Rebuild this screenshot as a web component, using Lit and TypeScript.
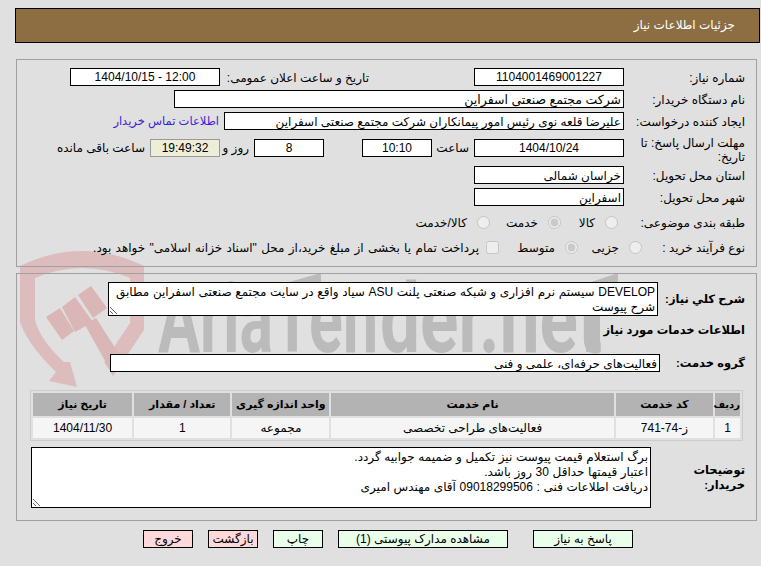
import { LitElement, html, css, svg } from "lit";
import { customElement } from "lit/decorators.js";

const watermark = svg`
  <svg class="wm" width="761" height="566" viewBox="0 0 761 566" xmlns="http://www.w3.org/2000/svg" aria-hidden="true">
    <path fill="#dcbcbc" d="M20 266 Q82 236 144 266 L144 330 L113 376 L104 362 L130 323 L130 278 Q82 258 35 278 L35 320 Q40 340 64 362 L70 362 L77 387 L49 381 L56 372 Q28 345 20 322 Z"/>
    <g fill="#dab6b6">
      <path d="M46 317 L60 308 L74 331 L62 340 Z"/>
      <path d="M62 307 L75 297 L93 322 L75 332 Z"/>
      <path d="M78 295 L91 286 L107 308 L93 318 Z"/>
      <path d="M85 325 L96 318 L123 360 L113 375 Z"/>
    </g>
    <g fill="#bbbbbb" font-family="Roboto, sans-serif" font-weight="700" font-size="96">
      <text x="158" y="352" textLength="220" lengthAdjust="spacingAndGlyphs">AriaTen</text>
      <text x="380" y="352" textLength="222" lengthAdjust="spacingAndGlyphs">der.net</text>
    </g>
    <path fill="#bbbbbb" d="M268 288 L321 273 L321 283 L280 295 Z"/>
    <path fill="#bbbbbb" d="M562 292 L618 273 L618 288 L600 294 L600 352 L586 352 L586 297 L562 304 Z"/>
  </svg>`;

@customElement("app-root")
export class AppRoot extends LitElement {
  static styles = css`
    :host {
      display: block;
      width: 761px;
      height: 566px;
      overflow: hidden;
      background: #e0e0e0;
      color: #000;
      font: 12px/15px "Liberation Sans", "DejaVu Sans", sans-serif;
    }
    .page { position: relative; height: 566px; direction: rtl; }
    .wm { position: absolute; left: 0; top: 0; direction: ltr; }
    .content { position: relative; padding: 8px 1px 0 0; }
    .header {
      height: 35px;
      margin-left: 15px;
      background: #8d6e42;
      border: 1px solid #000;
      box-sizing: border-box;
      color: #fff;
      display: flex;
      align-items: center;
      padding-right: 24px;
    }
    .fs {
      box-sizing: border-box;
      margin: 0 3px 0 0;
      width: 741px;
      border: 1px solid #a0a0a0;
      padding-right: 11px;
    }
    .fs1 { margin-top: 16px; height: 208px; padding-top: 8px; }
    .fs2 { margin-top: 6px; height: 248px; padding-top: 8px; }
    .row { display: flex; align-items: center; height: 18px; }
    .mt4 { margin-top: 4px; }
    .mt9 { margin-top: 9px; }
    .lab { width: 121px; flex: none; padding-top: 2px; box-sizing: border-box; }
    .lab-wrap { line-height: 14px; margin-top: 3px; padding-top: 0; }
    .box {
      box-sizing: border-box;
      height: 18px;
      background: #fff;
      border: 1px solid #000;
      padding: 0 2px;
      line-height: 16px;
      flex: none;
      white-space: nowrap;
      overflow: hidden;
    }
    .ar { padding-top: 1px; }
    .c { text-align: center; }
    .w150 { width: 150px; }
    .w70 { width: 70px; }
    .w400 { width: 400px; }
    .w450 { width: 450px; }
    .big-text { font-size: 12.5px; }
    .timer { background: #eeeed8; border-color: #999; }
    .after { margin-right: 5px; white-space: nowrap; }
    .pub { width: 149px; flex: none; margin-right: 105px; padding-top: 2px; white-space: nowrap; }
    .link { color: #3a22d6; margin-right: 5px; font-size: 11.5px; }
    .gap38 { margin-right: 38px; }
    .t1 { width: 42px; padding-right: 5px; box-sizing: border-box; flex: none; white-space: nowrap; }
    .t2 { width: 34px; padding-right: 5px; box-sizing: border-box; flex: none; white-space: nowrap; }
    .opts { display: flex; align-items: center; height: 18px; }
    .opt { display: flex; align-items: center; flex: none; white-space: nowrap; }
    .opt input { margin: 0; flex: none; width: 13px; height: 13px; }
    .opt span { margin-right: 10px; margin-top: 3px; }
    .opt .near { margin-right: 7px; word-spacing: 1px; }
    .r7 { margin-top: 7px; }
    .r8 { margin-top: 7px; }
    .lab8 { width: 103px; flex: none; padding-top: 2px; }
    .o1 { width: 63px; padding-right: 6px; box-sizing: border-box; margin-right: 0; }
    .o2 { width: 71px; }
    .o8a { width: 64px; }
    .o8b { width: 79px; }
    .bold { font-weight: 700; font-size: 11.5px; }
    .lab2 { width: 87px; flex: none; }
    .ta {
      box-sizing: border-box;
      display: block;
      flex: none;
      background: #fff;
      border: 1px solid #000;
      border-radius: 0;
      padding: 2px;
      margin: 0;
      font: inherit;
      line-height: 15px;
      word-spacing: 0.3px;
      color: #000;
      overflow: hidden;
      outline: none;
    }
    .ta1 { width: 550px; height: 34px; }
    .ta2 { width: 620px; height: 61px; }
    .topRow { display: flex; align-items: center; }
    .sub { margin-top: 7px; height: 15px; }
    .grp { margin-top: 16px; }
    .grp .lab2 { width: 85px; }
    .grp .box { width: 550px; }
    .tbl {
      border-collapse: separate;
      border-spacing: 2px;
      border: 1px solid #ccc;
      width: 713px;
      margin: 18px 2px 0 0;
      table-layout: fixed;
    }
    .tbl th, .tbl td { padding: 0; text-align: center; white-space: nowrap; }
    .tbl th { background: #b3b3b3; height: 23px; font-weight: 700; font-size: 11px; }
    .tbl th.tiny { font-size: 10px; }
    .tbl td { background: #f5f5f5; height: 20px; }
    .lab3 { width: 94px; flex: none; line-height: 15px; }
    .descRow { margin-top: 6px; }
    .buttons { display: flex; margin: 9px 0 0 0; padding-right: 127px; }
    .btn {
      box-sizing: border-box;
      height: 18px;
      border: 1px solid #000;
      background: #eaffea;
      text-align: center;
      line-height: 16px;
      flex: none;
      margin-left: 15px;
      width: 50px;
      white-space: nowrap;
    }
    .btn.big { width: 100px; margin-left: 25px; }
    .btn.mid { width: 170px; margin-left: 15px; }
    .btn.red { background: #ffd9d9; }
  `;

  render() {
    return html`
      <div class="page">
        ${watermark}
        <div class="content">
          <div class="header">جزئیات اطلاعات نیاز</div>

          <div class="fs fs1">
            <div class="row">
              <div class="lab">شماره نیاز:</div>
              <div class="box c w150">1104001469001227</div>
              <div class="pub">تاریخ و ساعت اعلان عمومی:</div>
              <div class="box c w150">12:00 - 1404/10/15</div>
            </div>
            <div class="row mt4">
              <div class="lab">نام دستگاه خریدار:</div>
              <div class="box ar w450 big-text">شرکت مجتمع صنعتی اسفراین</div>
            </div>
            <div class="row mt4">
              <div class="lab">ایجاد کننده درخواست:</div>
              <div class="box ar w400">علیرضا قلعه نوی رئیس امور پیمانکاران شرکت مجتمع صنعتی اسفراین</div>
              <div class="link">اطلاعات تماس خریدار</div>
            </div>
            <div class="row mt9">
              <div class="lab lab-wrap">مهلت ارسال پاسخ: تا تاریخ:</div>
              <div class="box c w150">1404/10/24</div>
              <div class="t1">ساعت</div>
              <div class="box c w70">10:10</div>
              <div class="box c w70 gap38">8</div>
              <div class="t2">روز و</div>
              <div class="box c w70 timer">19:49:32</div>
              <div class="after">ساعت باقی مانده</div>
            </div>
            <div class="row mt9">
              <div class="lab">استان محل تحویل:</div>
              <div class="box ar w150">خراسان شمالی</div>
            </div>
            <div class="row mt4">
              <div class="lab">شهر محل تحویل:</div>
              <div class="box ar w150">اسفراین</div>
            </div>
            <div class="row r7">
              <div class="lab">طبقه بندی موضوعی:</div>
              <div class="opts">
                <label class="opt o1"><input type="radio" disabled /><span>کالا</span></label>
                <label class="opt o2"><input type="radio" disabled checked /><span>خدمت</span></label>
                <label class="opt"><input type="radio" disabled /><span>کالا/خدمت</span></label>
              </div>
            </div>
            <div class="row r8">
              <div class="lab8">نوع فرآیند خرید :</div>
              <div class="opts">
                <label class="opt o8a"><input type="radio" disabled /><span>جزیی</span></label>
                <label class="opt o8b"><input type="radio" disabled checked /><span>متوسط</span></label>
                <label class="opt"><input type="checkbox" disabled /><span class="near">پرداخت تمام یا بخشی از مبلغ خرید،از محل "اسناد خزانه اسلامی" خواهد بود.</span></label>
              </div>
            </div>
          </div>

          <div class="fs fs2">
            <div class="topRow">
              <div class="lab2 bold">شرح کلي نیاز:</div>
              <textarea class="ta ta1" readonly>DEVELOP سیستم نرم افزاری و شبکه صنعتی پلنت ASU سیاد واقع در سایت مجتمع صنعتی اسفراین مطابق شرح پیوست</textarea>
            </div>
            <div class="sub bold">اطلاعات خدمات مورد نیاز</div>
            <div class="row grp">
              <div class="lab2 bold">گروه خدمت:</div>
              <div class="box ar">فعالیت‌های حرفه‌ای، علمی و فنی</div>
            </div>
            <table class="tbl">
              <colgroup>
                <col style="width:25px" /><col style="width:97px" /><col style="width:282px" />
                <col style="width:97px" /><col style="width:96px" /><col style="width:99px" />
              </colgroup>
              <thead>
                <tr><th class="tiny">ردیف</th><th>کد خدمت</th><th>نام خدمت</th><th>واحد اندازه گیری</th><th>تعداد / مقدار</th><th>تاریخ نیاز</th></tr>
              </thead>
              <tbody>
                <tr><td>1</td><td>ز-74-741</td><td>فعالیت‌های طراحی تخصصی</td><td>مجموعه</td><td>1</td><td>1404/11/30</td></tr>
              </tbody>
            </table>
            <div class="topRow descRow">
              <div class="lab3 bold">توضیحات خریدار:</div>
              <textarea class="ta ta2" readonly>برگ استعلام قیمت پیوست نیز تکمیل و ضمیمه جوابیه گردد.
اعتبار قیمتها حداقل 30 روز باشد.
دریافت اطلاعات فنی : 09018299506 آقای مهندس امیری</textarea>
            </div>
          </div>

          <div class="buttons">
            <div class="btn big">پاسخ به نیاز</div>
            <div class="btn mid">مشاهده مدارک پیوستی (1)</div>
            <div class="btn">چاپ</div>
            <div class="btn red">بازگشت</div>
            <div class="btn red">خروج</div>
          </div>
        </div>
      </div>
    `;
  }
}
